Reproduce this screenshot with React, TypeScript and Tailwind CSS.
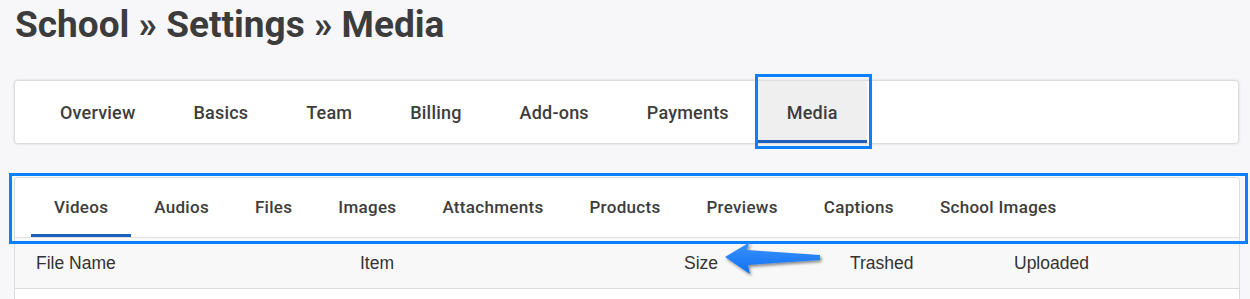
import React from "react";

const mainTabs = ["Overview", "Basics", "Team", "Billing", "Add-ons", "Payments", "Media"];
const subTabs = [
  "Videos",
  "Audios",
  "Files",
  "Images",
  "Attachments",
  "Products",
  "Previews",
  "Captions",
  "School Images",
];
const columns = ["File Name", "Item", "Size", "Trashed", "Uploaded"];

// blue annotation arrow pointing at the Size column
function Arrow() {
  return (
    <svg
      width="110"
      height="44"
      viewBox="0 0 110 44"
      className="absolute left-[-4px] top-[-10px] pointer-events-none"
    >
      <defs>
        <linearGradient id="arrowFill" x1="0" y1="0" x2="0" y2="1">
          <stop offset="0" stopColor="#3a93ff" />
          <stop offset="1" stopColor="#1170f0" />
        </linearGradient>
        <filter id="arrowShadow" x="-20%" y="-40%" width="140%" height="180%">
          <feDropShadow dx="1.5" dy="2" stdDeviation="1.5" floodColor="#000" floodOpacity="0.45" />
        </filter>
      </defs>
      <path
        d="M2 17 L27 2 Q25 6 24 10 L97 15 L97 20 L25 25 Q26 30 27 34 Z"
        fill="url(#arrowFill)"
        filter="url(#arrowShadow)"
      />
    </svg>
  );
}

export default function App() {
  return (
    <div
      className="min-h-[299px] bg-[#f7f7fa] px-[14px] pt-[3px] text-[#3d3d3d]"
      style={{ fontFamily: "Roboto, 'Noto Sans', sans-serif" }}
    >
      <h1 className="text-[37px] font-bold leading-[43px] pl-[1px] text-[#3c3c3c]">
        School » Settings » Media
      </h1>

      {/* Settings tabs */}
      <div className="mt-[34px] w-[1225px] rounded-[4px] border border-[#dcdcdc] bg-white shadow-[0_0_3px_rgba(0,0,0,0.12)]">
        <div className="flex h-[62px] items-stretch px-[16px]">
          {mainTabs.map((t) => {
            const active = t === "Media";
            return (
              <div
                key={t}
                className={`relative flex items-center px-[29px] text-[18px] font-medium tracking-[0.2px] ${
                  active ? "bg-[#efefef]" : ""
                }`}
              >
                {t}
                {active && (
                  <>
                    <span className="absolute bottom-0 left-0 right-0 h-[3px] bg-[#1c5fbc]" />
                    <span className="absolute -left-[3px] -right-[5px] -top-[7px] -bottom-[6px] border-[3px] border-[#0a80ff] pointer-events-none" />
                  </>
                )}
              </div>
            );
          })}
        </div>
      </div>

      {/* Media panel */}
      <div className="mt-[33px] w-[1226px] rounded-t-[4px] border border-b-0 border-[#dcdcdc] bg-white">
        <div className="relative border-b border-[#e0e0e0]">
          <div className="flex h-[59px] items-stretch px-[16px]">
            {subTabs.map((t) => {
              const active = t === "Videos";
              return (
                <div
                  key={t}
                  className="relative flex items-center px-[23px] pt-[1px] text-[17px] font-medium tracking-[0.3px]"
                >
                  {t}
                  {active && <span className="absolute bottom-0 left-0 right-0 h-[3px] bg-[#1c5fbc]" />}
                </div>
              );
            })}
          </div>
          <span className="absolute -left-[6px] -right-[9px] -top-[5px] -bottom-[7px] border-[3px] border-[#0a80ff] pointer-events-none" />
        </div>

        <div
          className="grid h-[51px] grid-cols-[324px_324px_166px_164px_1fr] items-center border-b border-[#dcdcdc] bg-[#f8f8f8] px-[21px] text-[17.5px] text-[#333]"
          style={{ fontFamily: "'Liberation Sans', Arial, sans-serif" }}
        >
          {columns.map((c) => (
            <div key={c} className="relative">
              {c}
              {c === "Size" && (
                <span className="absolute left-[43px] top-0">
                  <Arrow />
                </span>
              )}
            </div>
          ))}
        </div>
        <div className="h-[20px]" />
      </div>
    </div>
  );
}
